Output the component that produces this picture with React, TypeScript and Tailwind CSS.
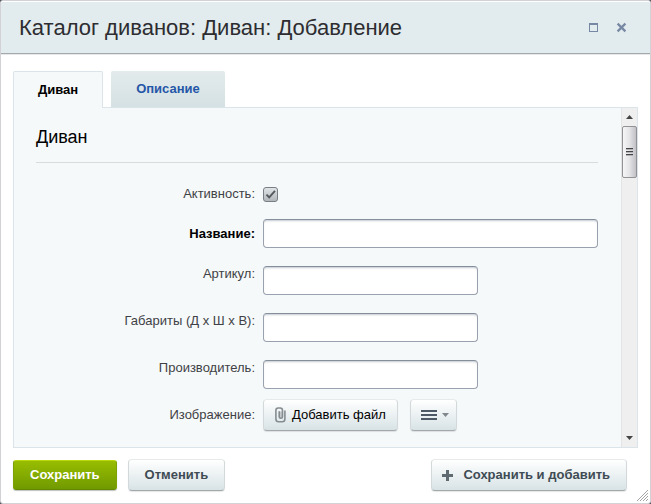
import React, { useState } from "react";
import type { ReactNode } from "react";

const silver =
  "flex h-8 items-center rounded-[4px] border border-t-[#e6eaeb] border-x-[#d3d9db] border-b-[#a3a9ab] bg-gradient-to-b from-white to-[#d8e3e6] shadow-[0_1px_1px_rgba(0,0,0,0.1)]";

const field =
  "block h-[29px] rounded-[4px] border border-[#9aa1ae] border-t-[#848f9c] bg-white px-2 text-[13px] shadow-[inset_0_2px_2px_-1px_rgba(110,125,140,0.4)] outline-none";

function Row({
  id,
  label,
  className = "items-start",
  bold = false,
  children,
}: {
  id: string;
  label: string;
  className?: string;
  bold?: boolean;
  children: ReactNode;
}) {
  return (
    <div className={`grid grid-cols-[219px_1fr] gap-2 ${className}`}>
      <label
        htmlFor={id}
        className={`text-right text-[13px] leading-4 ${bold ? "font-bold text-black" : "text-[#3f4146]"}`}
      >
        {label}
      </label>
      {children}
    </div>
  );
}

function ScrollBar() {
  return (
    <div className="flex w-4 shrink-0 flex-col items-center border-l border-[#e3e4e6] bg-[#efeff0]" aria-hidden="true">
      <div className="flex h-[18px] items-center">
        <svg width="7" height="4" viewBox="0 0 7 4">
          <path d="M3.5 0 7 4H0Z" fill="#444" />
        </svg>
      </div>
      <div className="flex h-[52px] w-full flex-col items-center justify-center gap-px rounded-[2px] border border-[#929295] bg-gradient-to-r from-[#f6f6f7] via-[#e4e4e7] to-[#c1c1c6]">
        <div className="h-0.5 w-[7px] border-t border-[#444] bg-[#b4b4b8]" />
        <div className="h-0.5 w-[7px] border-t border-[#444] bg-[#b4b4b8]" />
        <div className="h-0.5 w-[7px] border-t border-[#444] bg-[#b4b4b8]" />
      </div>
      <div className="mt-auto flex h-[18px] items-center">
        <svg width="7" height="4" viewBox="0 0 7 4">
          <path d="M0 0H7L3.5 4Z" fill="#444" />
        </svg>
      </div>
    </div>
  );
}

export default function App() {
  const [active, setActive] = useState(true);
  return (
    <div className="bg-[#555a5e] font-['Liberation_Sans',Arial,sans-serif]">
      <div className="relative flex min-h-screen flex-col rounded-[3px] border border-[#d2d2d6] bg-white">
        <header className="flex h-[53px] items-center justify-between rounded-t-[2px] border-t border-b border-t-white border-b-[#a3a9ac] bg-[#e2ebed] pr-[23px] pl-[18px] shadow-[0_1px_0_#e6e8e9]">
          <h1 className="text-[22px] leading-7 text-[#2d2d31]">Каталог диванов: Диван: Добавление</h1>
          <div className="flex items-center gap-[18px]">
            <button type="button" aria-label="Развернуть" className="block">
              <svg width="9" height="9" viewBox="0 0 9 9" shapeRendering="crispEdges">
                <path d="M.5 1V8.5H8.5V1" fill="none" stroke="#7788a4" />
                <path d="M0 0H9V2H0Z" fill="#7788a4" />
              </svg>
            </button>
            <button type="button" aria-label="Закрыть" className="block">
              <svg width="11" height="11" viewBox="0 0 11 11">
                <path d="M1.6 1.6 9.4 9.4M9.4 1.6 1.6 9.4" fill="none" stroke="#7788a4" strokeWidth="2.2" />
              </svg>
            </button>
          </div>
        </header>

        <main className="flex flex-1 flex-col px-3 pt-[17px]">
          <div role="tablist" className="flex h-9 items-stretch gap-2">
            <button
              type="button"
              role="tab"
              aria-selected="true"
              className="z-10 -mb-px rounded-t-[2px] border border-b-0 border-[#dbe4e8] bg-[#f5f9f9] px-6 text-[13px] font-bold text-black"
            >
              Диван
            </button>
            <button
              type="button"
              role="tab"
              aria-selected="false"
              className="rounded-t-[2px] bg-gradient-to-b from-[#e3ebec] to-[#d5e1e3] px-[25px] text-[13px] font-bold text-[#2557a7]"
            >
              Описание
            </button>
          </div>

          <section className="flex flex-1 border border-[#dbe4e8] bg-[#f5f9f9]">
            <form className="min-w-0 flex-1 pb-[15px] pr-[23px] pl-[22px]">
              <h2 className="mb-[23px] border-b border-[#d8dcde] pt-[17px] pb-[13px] text-[18px] leading-6 text-black">
                Диван
              </h2>
              <Row id="active" label="Активность:" className="mb-[18px] h-[15px] items-center">
                <span className="grid w-[15px]">
                  <input
                    id="active"
                    type="checkbox"
                    checked={active}
                    onChange={(e) => setActive(e.target.checked)}
                    className="peer col-start-1 row-start-1 size-[15px] appearance-none rounded-[3px] border border-[#777e84] bg-gradient-to-b from-[#e0e4e6] to-[#b1b7ba]"
                  />
                  <svg
                    className="pointer-events-none invisible col-start-1 row-start-1 peer-checked:visible"
                    width="15"
                    height="15"
                    viewBox="0 0 15 15"
                  >
                    <path d="M3.5 7.6 6.2 10.4 12 3.8" fill="none" stroke="#55595d" strokeWidth="1.9" />
                  </svg>
                </span>
              </Row>
              <Row id="name" label="Название:" className="mb-[18px] items-center" bold>
                <input id="name" type="text" className={`${field} w-full`} />
              </Row>
              <Row id="sku" label="Артикул:" className="mb-[18px] items-start">
                <input id="sku" type="text" className={`${field} w-[215px]`} />
              </Row>
              <Row id="size" label="Габариты (Д х Ш х В):" className="mb-[18px] items-start">
                <input id="size" type="text" className={`${field} w-[215px]`} />
              </Row>
              <Row id="maker" label="Производитель:" className="mb-[10px] items-start">
                <input id="maker" type="text" className={`${field} w-[215px]`} />
              </Row>
              <Row id="image" label="Изображение:" className="items-center">
                <div className="flex gap-3">
                  <button id="image" type="button" className={`${silver} gap-1.5 px-[11px] text-[13px] text-black`}>
                    <svg width="11" height="16" viewBox="0 0 11 16">
                      <path d="M4 4.5H7V11H4Z" fill="#c3c9cb" />
                      <path
                        d="M9.9 3.5V12Q9.9 14.8 7.2 14.8H3.6Q.9 14.8 .9 12V3.4Q.9 1 3.2 1H5.2Q7.5 1 7.5 3.4V9.7Q7.5 11.3 5.8 11.3Q4.2 11.3 4.2 9.7V4.2"
                        fill="none"
                        stroke="#858d91"
                        strokeWidth="1.6"
                      />
                    </svg>
                    Добавить файл
                  </button>
                  <button type="button" aria-label="Меню" className={`${silver} gap-[5px] pr-[7px] pl-[10px]`}>
                    <svg width="16" height="10" viewBox="0 0 16 10" shapeRendering="crispEdges">
                      <path d="M0 0H16V2H0ZM0 4H16V6H0ZM0 8H16V10H0Z" fill="#4c5865" />
                    </svg>
                    <svg width="7" height="4" viewBox="0 0 7 4">
                      <path d="M0 0H7L3.5 4Z" fill="#80888d" />
                    </svg>
                  </button>
                </div>
              </Row>
            </form>
            <ScrollBar />
          </section>
        </main>

        <footer className="flex items-center gap-[11px] pt-[11px] pr-[23px] pb-3 pl-3">
          <button
            type="button"
            className="h-[30px] rounded-[3px] border border-t-[#bcd60c] border-x-[#7ca203] border-b-[#638800] bg-gradient-to-b from-[#98bd00] to-[#719a00] px-4 text-[13px] font-bold text-white shadow-[0_1px_1px_rgba(0,0,0,0.25)]"
          >
            Сохранить
          </button>
          <button type="button" className={`${silver} px-4 text-[13px] font-bold text-[#3f4b54]`}>
            Отменить
          </button>
          <button type="button" className={`${silver} ml-auto gap-[10px] pr-4 pl-[10px] text-[13px] font-bold text-[#3f4b54]`}>
            <svg width="11" height="11" viewBox="0 0 11 11" shapeRendering="crispEdges">
              <path d="M4 0H7V4H11V7H7V11H4V7H0V4H4Z" fill="#5f6a71" />
            </svg>
            Сохранить и добавить
          </button>
        </footer>
        <svg className="absolute right-0.5 bottom-0.5" width="11" height="11" viewBox="0 0 11 11" aria-hidden="true">
          <path d="M0 11 11 0M3 11 11 3M6 11 11 6M9 11 11 9" stroke="#999" fill="none" strokeWidth="0.9" />
        </svg>
      </div>
    </div>
  );
}
